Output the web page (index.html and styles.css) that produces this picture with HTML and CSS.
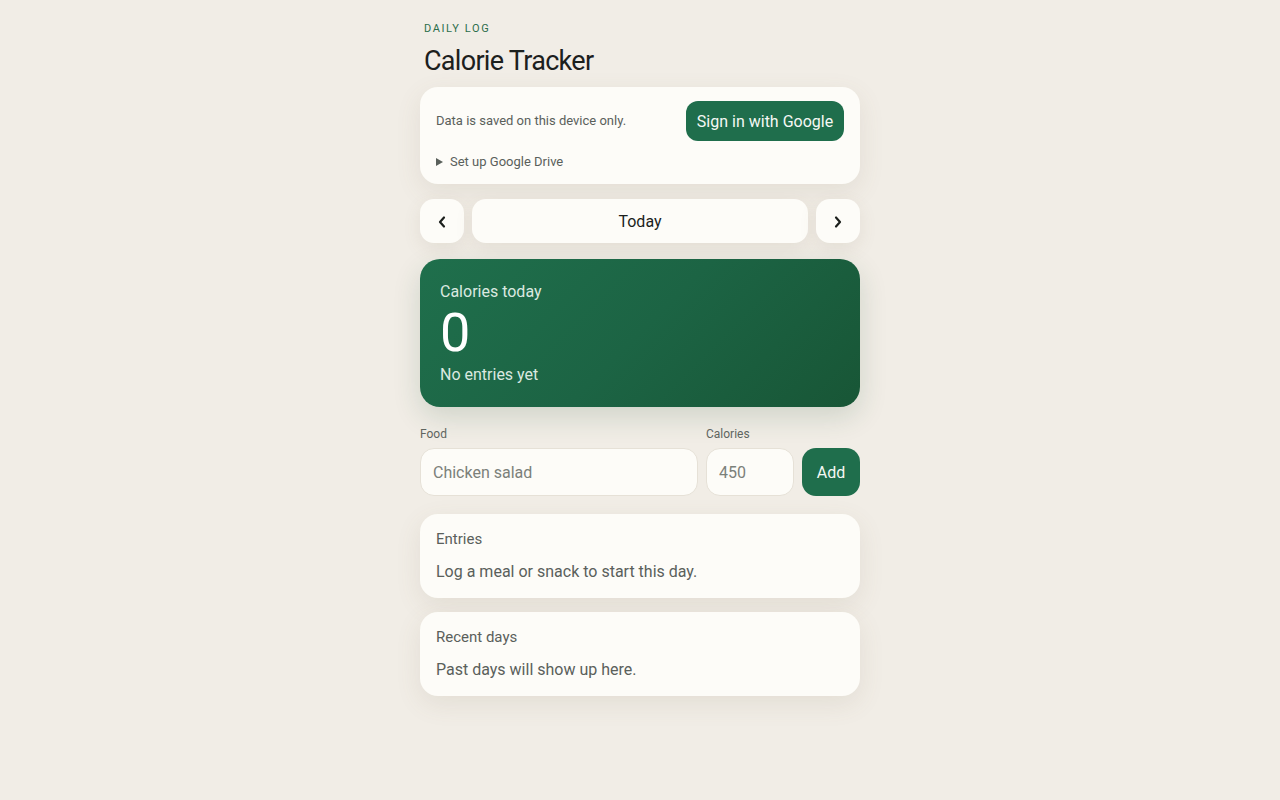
FILE: index.html
```html
<!DOCTYPE html>
<html lang="en">
<head>
<meta charset="utf-8">
<title>Calorie Tracker</title>
<link rel="stylesheet" href="styles.css">
</head>
<body>
<main class="app">
  <header class="head">
    <p class="eyebrow">DAILY LOG</p>
    <h1 class="title">Calorie Tracker</h1>
  </header>

  <section class="card sync">
    <div class="sync-row">
      <p class="sync-note">Data is saved on this device only.</p>
      <button class="btn btn-primary">Sign in with Google</button>
    </div>
    <details class="drive">
      <summary>Set up Google Drive</summary>
    </details>
  </section>

  <nav class="daynav">
    <button class="nav-btn" aria-label="Previous day">
      <svg width="10" height="14" viewBox="0 0 10 14"><path d="M7 2.5 L3 7 L7 11.5" fill="none" stroke="#1b1f1c" stroke-width="2.2" stroke-linecap="round" stroke-linejoin="round"/></svg>
    </button>
    <div class="day-label">Today</div>
    <button class="nav-btn" aria-label="Next day">
      <svg width="10" height="14" viewBox="0 0 10 14"><path d="M3 2.5 L7 7 L3 11.5" fill="none" stroke="#1b1f1c" stroke-width="2.2" stroke-linecap="round" stroke-linejoin="round"/></svg>
    </button>
  </nav>

  <section class="hero">
    <p class="hero-label">Calories today</p>
    <p class="hero-value">0</p>
    <p class="hero-sub">No entries yet</p>
  </section>

  <form class="add-form">
    <label class="field field-food">
      <span class="field-label">Food</span>
      <input class="input" type="text" placeholder="Chicken salad">
    </label>
    <label class="field field-cal">
      <span class="field-label">Calories</span>
      <input class="input" type="text" placeholder="450">
    </label>
    <button class="btn btn-primary btn-add" type="button">Add</button>
  </form>

  <section class="card list">
    <h2 class="list-title">Entries</h2>
    <p class="list-empty">Log a meal or snack to start this day.</p>
  </section>

  <section class="card list">
    <h2 class="list-title">Recent days</h2>
    <p class="list-empty">Past days will show up here.</p>
  </section>
</main>
</body>
</html>
```

FILE: styles.css
```css
* { box-sizing: border-box; }

html, body {
  margin: 0;
  background: #f1ede6;
}

body {
  font-family: Roboto, "Liberation Sans", sans-serif;
  color: #1b1f1c;
}

p, h1, h2 { margin: 0; }

.app {
  width: 440px;
  margin: 0 auto;
  padding: 21px 0 40px;
  display: flex;
  flex-direction: column;
}

.head {
  padding: 0 4px;
  margin-bottom: 8px;
}

.eyebrow {
  font-size: 11px;
  letter-spacing: 1.6px;
  color: #2c6e4b;
  line-height: 16px;
}

.title {
  margin-top: 6px;
  font-size: 27px;
  font-weight: 400;
  letter-spacing: -0.7px;
  line-height: 36px;
  color: #1c201d;
}

.card {
  background: #fdfcf8;
  border-radius: 18px;
  box-shadow: 0 8px 26px rgba(120, 100, 70, 0.11);
}

.sync {
  padding: 14px 16px 15px;
  margin-bottom: 15px;
}

.sync-row {
  display: flex;
  align-items: center;
  justify-content: space-between;
}

.sync-note {
  font-size: 13px;
  color: #5a605b;
  margin-top: -1px;
}

.btn {
  font-family: inherit;
  border: none;
  cursor: pointer;
}

.btn-primary {
  background: #1f6e4c;
  color: #f5f8f4;
  font-size: 16px;
  height: 40px;
  padding: 0 12px;
  border-radius: 12px;
}

.sync .btn-primary { width: 158px; padding: 0; }

.drive {
  margin-top: 13px;
  font-size: 13px;
  color: #5a605b;
}

.drive summary {
  list-style: none;
  display: flex;
  align-items: center;
  gap: 7px;
  cursor: pointer;
}

.drive summary::-webkit-details-marker { display: none; }

.drive summary::before {
  content: "";
  width: 0;
  height: 0;
  border-left: 7px solid #5a605b;
  border-top: 4px solid transparent;
  border-bottom: 4px solid transparent;
}

.daynav {
  display: flex;
  gap: 8px;
  margin-bottom: 16px;
}

.nav-btn {
  width: 44px;
  height: 44px;
  flex: none;
  border: none;
  border-radius: 14px;
  background: #fdfcf8;
  box-shadow: 0 6px 18px rgba(120, 100, 70, 0.10);
  display: flex;
  align-items: center;
  justify-content: center;
  padding: 2px 0 0;
  cursor: pointer;
}

.day-label {
  flex: 1;
  height: 44px;
  border-radius: 14px;
  background: #fdfcf8;
  box-shadow: 0 6px 18px rgba(120, 100, 70, 0.10);
  display: flex;
  align-items: center;
  justify-content: center;
  padding-top: 1px;
  font-size: 16px;
  color: #1b1f1c;
}

.hero {
  height: 148px;
  border-radius: 20px;
  padding: 22px 20px 0;
  background: linear-gradient(135deg, #1f6f4c 0%, #1c6444 50%, #185636 100%);
  color: #fff;
  box-shadow: 0 10px 28px rgba(30, 80, 50, 0.16);
  margin-bottom: 19px;
}

.hero-label {
  font-size: 16px;
  line-height: 22px;
  color: #dbe9e0;
}

.hero-value {
  font-size: 54px;
  line-height: 60px;
  font-weight: 400;
  color: #fff;
}

.hero-sub {
  margin-top: 1px;
  font-size: 16px;
  line-height: 22px;
  color: #dbe9e0;
}

.add-form {
  display: flex;
  align-items: flex-end;
  gap: 8px;
  margin-bottom: 18px;
}

.field {
  display: flex;
  flex-direction: column;
  gap: 6px;
}

.field-food { flex: 1; }
.field-cal { width: 88px; flex: none; }

.field-label {
  font-size: 12px;
  line-height: 16px;
  color: #5f655f;
}

.input {
  height: 48px;
  width: 100%;
  border: 1px solid #e6e1d7;
  border-radius: 14px;
  background: #fdfcf8;
  padding: 0 12px;
  font-family: inherit;
  font-size: 16px;
  color: #1b1f1c;
  outline: none;
}

.input::placeholder { color: #7b807a; }

.btn-add {
  height: 48px;
  width: 58px;
  padding: 0;
  border-radius: 14px;
}

.list {
  padding: 16px 16px 15px;
  margin-bottom: 14px;
}

.list-title {
  font-size: 15px;
  font-weight: 400;
  line-height: 18px;
  color: #5a605b;
}

.list-empty {
  margin-top: 13px;
  font-size: 16px;
  line-height: 22px;
  color: #5a605b;
}
```
